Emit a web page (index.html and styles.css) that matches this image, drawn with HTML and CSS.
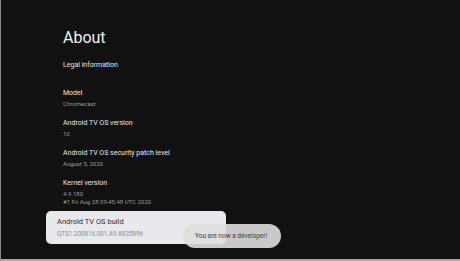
FILE: index.html
```html
<!DOCTYPE html>
<html>
    <head>
        <title>About</title>
        <link rel="stylesheet" href="styles.css">
    </head>
    <body>
        <div class="screen">
            <h1 class="page-title">About</h1>
            <ul class="settings-list">
                <li class="settings-item single">
                    <div class="item-title">Legal information</div>
                </li>
                <li class="settings-item">
                    <div class="item-title">Model</div>
                    <div class="item-sub">Chromecast</div>
                </li>
                <li class="settings-item">
                    <div class="item-title">Android TV OS version</div>
                    <div class="item-sub">10</div>
                </li>
                <li class="settings-item">
                    <div class="item-title">Android TV OS security patch level</div>
                    <div class="item-sub">August 5, 2020</div>
                </li>
                <li class="settings-item">
                    <div class="item-title">Kernel version</div>
                    <div class="item-sub">4.9.180</div>
                    <div class="item-sub tight">#1 Fri Aug 28 09:45:48 UTC 2020</div>
                </li>
                <li class="settings-item focused">
                    <div class="item-title">Android TV OS build</div>
                    <div class="item-sub">QTS1.200816.001.A9.6835896</div>
                </li>
            </ul>
            <div class="toast">You are now a developer!</div>
        </div>
    </body>
</html>
```

FILE: styles.css
```css
:root {
    --bg-color: #111111;
    --ft-color: #e8e8e8;
    --sub-color: #9a9a9a;
    --card-color: #e8e9ec;
}

*, *::before, *::after {
    box-sizing: border-box;
}

body {
    margin: 0px;
    background-color: var(--bg-color);
    font-family: Roboto, "Noto Sans", sans-serif;
}

.screen {
    position: relative;
    width: 460px;
    height: 261px;
    padding: 28px 0px 0px 62px;
    background-color: var(--bg-color);
    border-left: 1px solid #8a8a8a;
    border-bottom: 2px solid #a8a8a8;
    overflow: hidden;
}

.page-title {
    margin: 0px;
    font-size: 16px;
    line-height: 20px;
    font-weight: 400;
    color: #f2f2f2;
}

.settings-list {
    list-style: none;
    margin: 12px 0px 0px 0px;
    padding: 0px;
    display: flex;
    flex-direction: column;
    gap: 10px;
}

.settings-item.single {
    margin-bottom: 8px;
}

.item-title {
    font-size: 7px;
    line-height: 10px;
    color: var(--ft-color);
}

.item-sub {
    margin-top: 2px;
    font-size: 6px;
    line-height: 8px;
    color: var(--sub-color);
}

.item-sub.tight {
    margin-top: 0px;
}

.settings-item.focused {
    width: 180px;
    margin: -5px 0px 0px -17px;
    padding: 6px 11px 6px 11px;
    border-radius: 5px;
    background-color: var(--card-color);
}

.focused .item-title {
    font-size: 7.5px;
    color: #2a2b2e;
}

.focused .item-sub {
    margin-top: 3px;
    font-size: 6.3px;
    color: #8a8d92;
}

.toast {
    position: absolute;
    left: 182px;
    top: 224px;
    width: 98px;
    height: 24px;
    padding-left: 12px;
    display: flex;
    align-items: center;
    border-radius: 12px;
    background-color: rgba(222, 222, 222, 0.9);
    color: #3c3c3c;
    font-size: 6.5px;
}
```
